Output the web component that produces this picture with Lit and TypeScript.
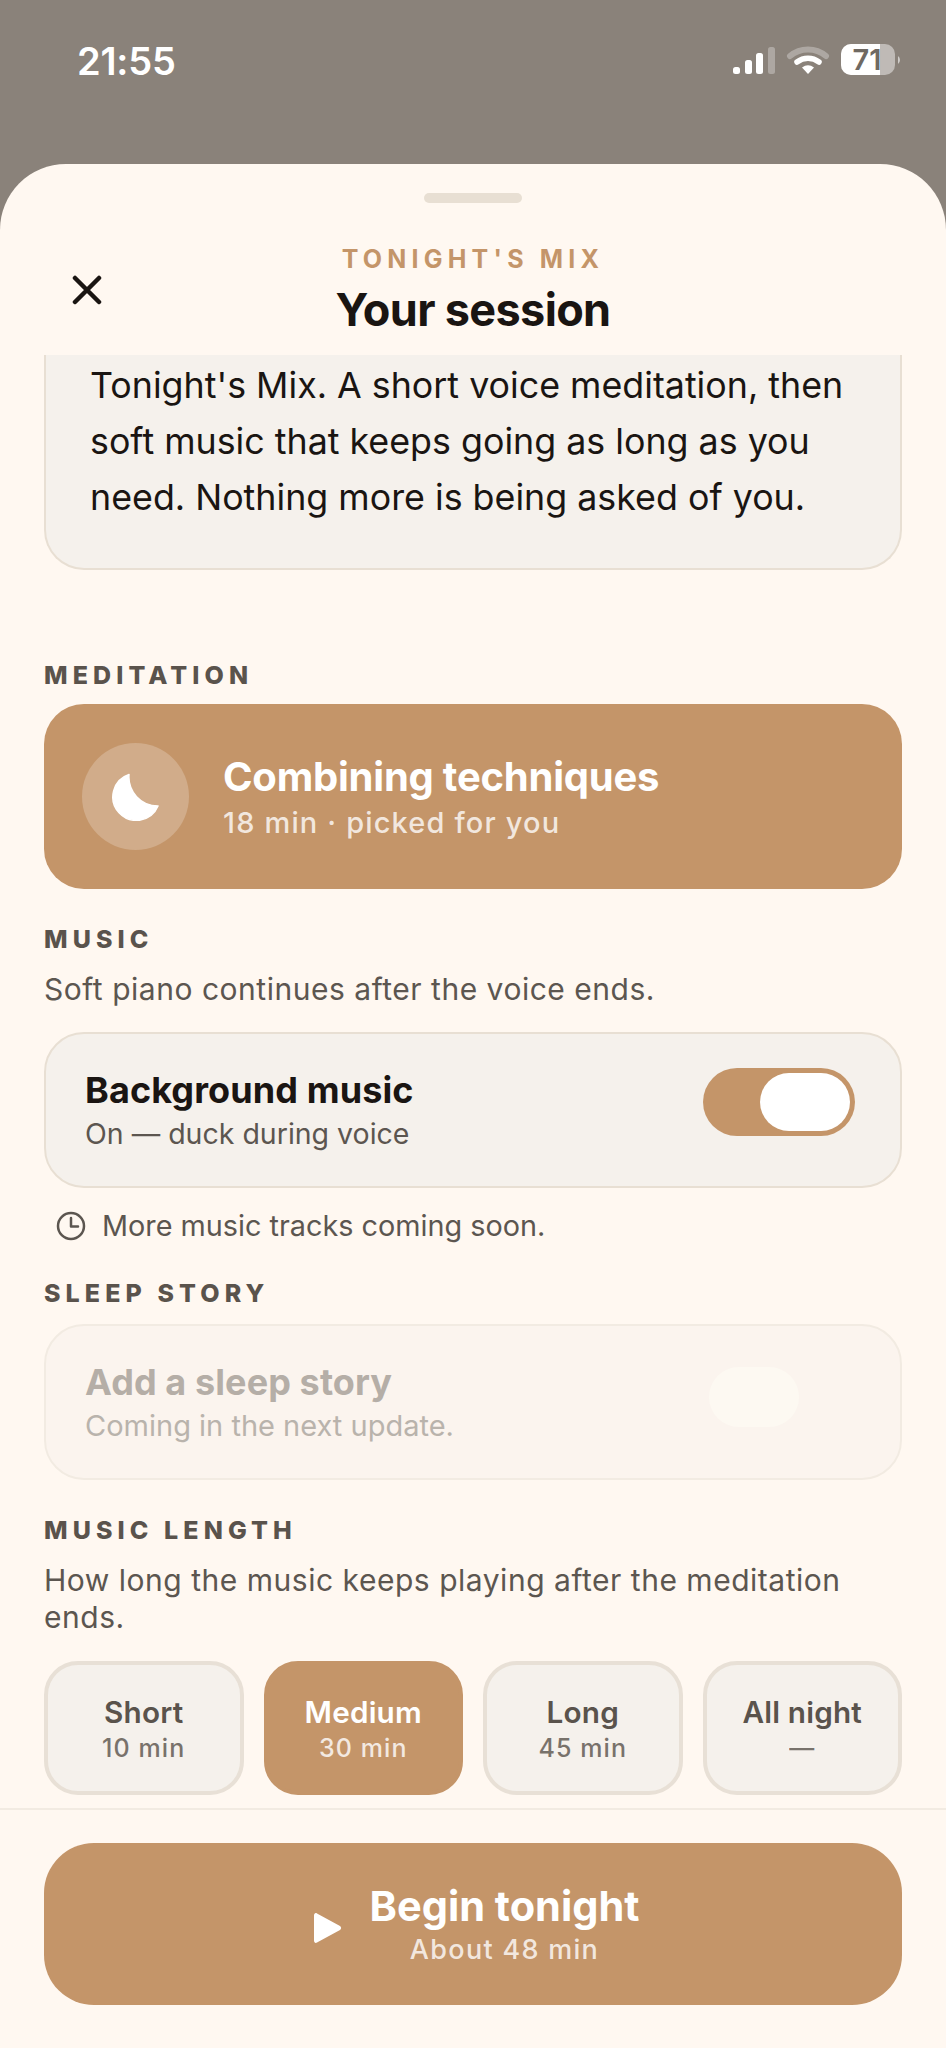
import { LitElement, html, css } from "lit";
import { customElement } from "lit/decorators.js";

@customElement("app-root")
export class AppRoot extends LitElement {
  static styles = css`
    :host { display: block; width: 946px; height: 2048px; background: #8a827a; font-family: Inter, "Noto Sans", sans-serif; overflow: hidden; }
    .status { height: 164px; box-sizing: border-box; padding: 44px 44px 0 77px; display: flex; justify-content: space-between; align-items: flex-start; color: #fff; }
    .time { font-size: 38px; font-weight: 600; line-height: 34px; letter-spacing: -.2px; }
    .icons { display: block; margin-top: -8px; }
    .sheet { height: 1884px; box-sizing: border-box; background: #fff8f1; border-radius: 66px 66px 0 0; display: flex; flex-direction: column; overflow: hidden; }
    .handle { width: 98px; height: 10px; border-radius: 5px; background: #e8dfd3; margin: 29px auto 0; flex: none; }
    .head { flex: none; height: 152px; display: flex; flex-direction: column; align-items: center; position: relative; }
    .eyebrow { margin-top: 41px; font-size: 25px; line-height: 30px; font-weight: 700; letter-spacing: 5.2px; color: #c49569; }
    .title { margin-top: 9px; font-size: 45px; line-height: 54px; font-weight: 700; letter-spacing: -0.65px; color: #1a1512; }
    .close { position: absolute; left: 72px; top: 72px; display: block; }
    .scroll { flex: 1; min-height: 0; overflow: hidden; padding: 0 44px; }
    .intro { margin-top: -3px; box-sizing: border-box; height: 218px; padding: 5px 38px 0 44px; background: #f5f1ec; border: 2px solid #e8dfd3; border-top: none; border-radius: 0 0 40px 40px; font-size: 35.8px; line-height: 56px; color: #1a1512; }
    .label { font-size: 25px; line-height: 30px; font-weight: 800; letter-spacing: 5.1px; color: #5a534c; }
    .l1 { margin-top: 90px; }
    .medi { margin-top: 14px; height: 185px; border-radius: 40px; background: #c49569; display: flex; align-items: center; padding-left: 38px; gap: 34px; box-sizing: border-box; }
    .disc { width: 107px; height: 107px; border-radius: 50%; background: rgba(255,255,255,.22); display: flex; align-items: center; justify-content: center; flex: none; }
    .medi-t { font-size: 40px; line-height: 48px; font-weight: 700; letter-spacing: -.22px; color: #fff; position: relative; top: 1px; }
    .medi-s { margin-top: 5px; font-size: 29px; line-height: 36px; font-weight: 500; letter-spacing: 1.15px; color: rgba(255,255,255,.78); }
    .l2 { margin-top: 35px; }
    .desc { font-size: 30px; line-height: 37px; color: #5c5650; letter-spacing: .52px; }
    .d1 { margin-top: 17px; }
    .card { box-sizing: border-box; height: 156px; border: 2px solid #e8dfd3; border-radius: 40px; background: #f5f1ec; display: flex; align-items: center; justify-content: space-between; padding: 0 45px 0 39px; }
    .c1 { margin-top: 24px; }
    .card-t { font-size: 36px; line-height: 44px; font-weight: 700; color: #1a1512; letter-spacing: .1px; }
    .card-s { margin-top: 4px; font-size: 28.5px; line-height: 36px; color: #5c5650; }
    .toggle { width: 152px; height: 68px; margin-bottom: 16px; border-radius: 34px; background: #c49569; box-sizing: border-box; padding: 5px; display: flex; justify-content: flex-end; }
    .knob { width: 90px; height: 58px; border-radius: 29px; background: #fff; }
    .note { margin-top: 20px; margin-left: 12px; display: flex; align-items: center; gap: 16px; font-size: 28.8px; line-height: 36px; color: #5c5650; }
    .l3 { margin-top: 34px; }
    .off { margin-top: 16px; background: #fbf4ee; border-color: #f2ebe2; padding-right: 101px; }
    .off .card-t { color: #b5aea7; }
    .off .card-s { color: #b9b3ac; font-size: 29px; }
    .off-knob { width: 90px; height: 60px; margin-bottom: 10px; border-radius: 30px; background: #fdf9f2; }
    .l4 { margin-top: 35px; }
    .d2 { margin-top: 17px; }
    .opts { margin-top: 25px; display: grid; grid-template-columns: repeat(4, 1fr); gap: 20px; }
    .opt { box-sizing: border-box; height: 134px; border: 4px solid #e8e0d6; border-radius: 34px; background: #f5f1ec; display: flex; flex-direction: column; align-items: center; justify-content: center; color: #5a534c; }
    .opt.on { background: #c49569; border-color: #c49569; color: #fff; }
    .opt b { font-size: 29.7px; line-height: 36px; font-weight: 600; letter-spacing: .2px; }
    .opt span { margin-top: 3px; font-size: 25px; line-height: 30px; font-weight: 500; letter-spacing: 1.1px; opacity: .8; }
    .foot { flex: none; height: 240px; box-sizing: border-box; border-top: 2px solid #f2ebe2; padding: 33px 44px 0; }
    .cta { height: 162px; border-radius: 50px; background: #c49569; display: flex; align-items: center; justify-content: center; gap: 28px; color: #fff; padding-left: 5px; }
    .cta-col { display: flex; flex-direction: column; align-items: center; }
    .cta-t { font-size: 41.5px; line-height: 48px; font-weight: 700; }
    .cta-s { margin-top: 3px; font-size: 27px; line-height: 34px; font-weight: 500; letter-spacing: 1.3px; color: rgba(255,255,255,.8); }
    .play { display: block; margin-top: 7px; }
  `;

  render() {
    return html`
      <div class="status">
        <div class="time">21:55</div>
        <svg class="icons" width="170" height="52" viewBox="0 -8 170 52">
          <g transform="translate(-732 -44)">
            <rect x="733" y="67" width="7" height="7" rx="2.5" fill="#fff" />
            <rect x="745" y="60" width="7" height="14" rx="2.5" fill="#fff" />
            <rect x="756" y="53" width="7" height="21" rx="2.5" fill="#fff" />
            <rect x="768" y="47" width="7" height="27" rx="2.5" fill="#fff" opacity=".3" />
            <path d="M790 56a28 28 0 0 1 36 0" fill="none" stroke="#fff" stroke-opacity=".3" stroke-width="6" stroke-linecap="round"/>
            <path d="M797 62a18 18 0 0 1 22 0" fill="none" stroke="#fff" stroke-width="5.5" stroke-linecap="round"/>
            <path d="M802 67.5a10 10 0 0 1 12 0L808 74z" fill="#fff" />
            <rect x="841" y="44" width="54" height="31" rx="10" fill="#fff" fill-opacity=".45" />
            <path d="M851 44h29v31h-29a10 10 0 0 1-10-10V54a10 10 0 0 1 10-10z" fill="#fff" />
            <path d="M898 56a5 5 0 0 1 0 8z" fill="#fff" fill-opacity=".6" />
            <text x="867" y="70" text-anchor="middle" font-size="29" font-weight="600" fill="#6f6962" font-family="Inter, sans-serif">71</text>
          </g>
        </svg>
      </div>
      <div class="sheet">
        <div class="handle"></div>
        <div class="head">
          <div class="eyebrow">TONIGHT'S MIX</div>
          <div class="title">Your session</div>
          <svg class="close" width="30" height="30" viewBox="0 0 30 30"><path d="M3 3l24 24M27 3L3 27" stroke="#1a1512" stroke-width="4.500" stroke-linecap="round"/></svg>
        </div>
        <div class="scroll">
          <div class="intro">Tonight's Mix. A short voice meditation, then soft music that keeps going as long as you need. Nothing more is being asked of you.</div>
          <div class="label l1">MEDITATION</div>
          <div class="medi">
            <div class="disc">
              <svg width="48" height="48" viewBox="0 0 48 48"><path d="M17 1.500A23.500 23.500 0 1 0 46 33A29 29 0 0 1 17 1.500z" fill="#fff" stroke="#fff" stroke-width="1.500" stroke-linejoin="round"/></svg>
            </div>
            <div>
              <div class="medi-t">Combining techniques</div>
              <div class="medi-s">18 min · picked for you</div>
            </div>
          </div>
          <div class="label l2">MUSIC</div>
          <div class="desc d1">Soft piano continues after the voice ends.</div>
          <div class="card c1">
            <div>
              <div class="card-t">Background music</div>
              <div class="card-s">On — duck during voice</div>
            </div>
            <div class="toggle"><div class="knob"></div></div>
          </div>
          <div class="note">
            <svg width="30" height="30" viewBox="0 0 30 30"><circle cx="15" cy="15" r="13" fill="none" stroke="#5c5650" stroke-width="2.500"/><path d="M15 7v8.500h7" fill="none" stroke="#5c5650" stroke-width="2.500" stroke-linecap="round" stroke-linejoin="round"/></svg>
            More music tracks coming soon.
          </div>
          <div class="label l3">SLEEP STORY</div>
          <div class="card off">
            <div>
              <div class="card-t">Add a sleep story</div>
              <div class="card-s">Coming in the next update.</div>
            </div>
            <div class="off-knob"></div>
          </div>
          <div class="label l4">MUSIC LENGTH</div>
          <div class="desc d2">How long the music keeps playing after the meditation ends.</div>
          <div class="opts">
            <div class="opt"><b>Short</b><span>10 min</span></div>
            <div class="opt on"><b>Medium</b><span>30 min</span></div>
            <div class="opt"><b>Long</b><span>45 min</span></div>
            <div class="opt"><b>All night</b><span>—</span></div>
          </div>
        </div>
        <div class="foot">
          <div class="cta">
            <svg class="play" width="30" height="32" viewBox="0 0 30 32"><path d="M2 3.500C2 1.500 3.500.5 5 1.500l23 12.500c1.500 1 1.500 3 0 4L5 30.500c-1.500 1-3 0-3-2z" fill="#fff"/></svg>
            <div class="cta-col">
              <div class="cta-t">Begin tonight</div>
              <div class="cta-s">About 48 min</div>
            </div>
          </div>
        </div>
      </div>
    `;
  }
}
